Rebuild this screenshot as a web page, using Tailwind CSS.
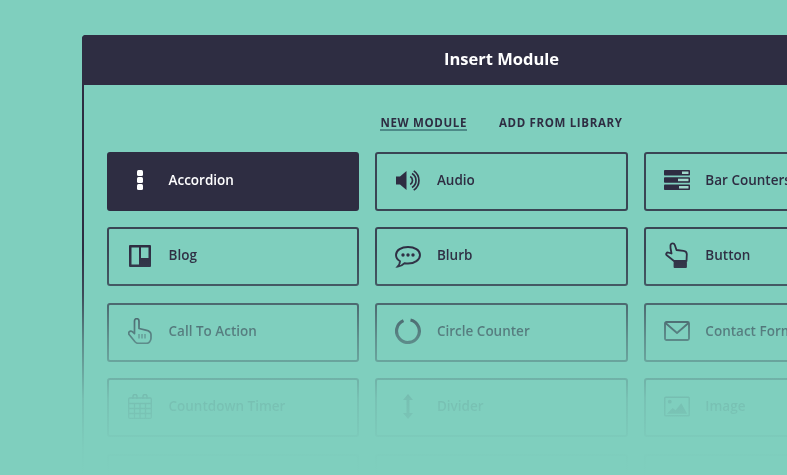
<!DOCTYPE html>
<html lang="en">
<head>
  <meta charset="UTF-8" />
  <meta name="viewport" content="width=device-width, initial-scale=1.0" />
  <title>Insert Module</title>
  <script src="https://cdn.jsdelivr.net/npm/@tailwindcss/browser@4"></script>
</head>
<body class="relative h-[475px] overflow-hidden bg-[#7fcfbe] font-['Open_Sans',sans-serif] text-[#2e2d42]">

  <!-- modal -->
  <div class="ml-[82px] mt-[35px] w-[839px] rounded-t-[4px] border-2 border-[#2e2d42] blur-[0.45px]">
    <header class="-m-[2px] flex h-[50px] items-center justify-center rounded-t-[4px] bg-[#2e2d42] pb-[2px] text-[16.5px] font-bold text-white">Insert Module</header>

    <div class="pl-[23px] pr-[23px] pt-[33px]">
      <!-- tabs -->
      <nav class="flex h-[15px] items-start justify-center gap-[32px] text-[11.5px] font-bold leading-[13px] tracking-[0.65px]">
        <a class="border-b-2 border-[#4d8a88]">NEW MODULE</a>
        <a>ADD FROM LIBRARY</a>
      </nav>

      <!-- module grid -->
      <div class="mt-[21px] grid grid-cols-3 gap-x-[16.3px] gap-y-[16.4px] text-[13.5px] font-semibold">

        <div class="flex h-[59px] items-center gap-[15.5px] rounded-[3px] border-2 border-[#2e2d42] bg-[#2e2d42] px-[18px] pb-[3px] text-white">
          <div class="flex w-[26px] justify-center">
            <svg width="6" height="20" viewBox="0 0 6 20" fill="#fff"><rect width="6" height="6" rx="1.500"/><rect y="7" width="6" height="6" rx="1.500"/><rect y="14" width="6" height="6" rx="1.500"/></svg>
          </div>
          <span>Accordion</span>
        </div>

        <div class="flex h-[59px] items-center gap-[15.5px] rounded-[3px] border-2 border-[#2e2d42]/85 px-[18px] pb-[3px]">
          <div class="flex w-[26px] justify-center">
            <svg width="25" height="21" viewBox="0 0 25 21" fill="none" stroke="#2e2d42"><path d="M0 6.500h4L10.500 1v19L4 14.500H0z" fill="#2e2d42" stroke="none"/><path d="M14.250 6.600a4.500 4.500 0 0 1 0 7.800" stroke-width="1.700"/><path d="M16 3.570a8 8 0 0 1 0 13.860" stroke-width="1.700"/><path d="M17.750 .9a11.500 11.500 0 0 1 0 19.200" stroke-width="1.700"/></svg>
          </div>
          <span>Audio</span>
        </div>

        <div class="flex h-[59px] items-center gap-[15.5px] rounded-[3px] border-2 border-[#2e2d42]/85 px-[18px] pb-[3px]">
          <div class="flex w-[26px] justify-center">
            <svg width="26" height="20" viewBox="0 0 26 20"><rect width="26" height="5.500" rx=".8" fill="#2e2d42"/><rect y="7.200" width="26" height="5.500" rx=".8" fill="#2e2d42"/><rect y="14.500" width="26" height="5.500" rx=".8" fill="#2e2d42"/><rect x="18" y="1.500" width="6.500" height="2.500" fill="#9fd8cb"/><rect x="14" y="8.700" width="10.500" height="2.500" fill="#9fd8cb"/><rect x="15" y="16" width="9.500" height="2.500" fill="#9fd8cb"/></svg>
          </div>
          <span>Bar Counters</span>
        </div>

        <div class="flex h-[59px] items-center gap-[15.5px] rounded-[3px] border-2 border-[#2e2d42]/85 px-[18px] pb-[3px]">
          <div class="mt-[2px] flex w-[26px] justify-center">
            <svg width="22" height="22" viewBox="0 0 22 22"><rect width="22" height="22" rx="1" fill="#2e2d42"/><rect x="2.500" y="2.500" width="7.500" height="17" fill="#7fcfbe"/><rect x="12" y="2.500" width="7.500" height="10.500" fill="#7fcfbe"/></svg>
          </div>
          <span>Blog</span>
        </div>

        <div class="flex h-[59px] items-center gap-[15.5px] rounded-[3px] border-2 border-[#2e2d42]/85 px-[18px] pb-[3px]">
          <div class="mt-[4px] flex w-[26px] justify-center">
            <svg width="26" height="22" viewBox="0 0 26 22" fill="none" stroke="#2e2d42" stroke-width="1.900"><path d="M13 1C6.500 1 1 4 1 9c0 2.500 1.500 4.700 4 6.200 0 1.800-.8 3.800-2.200 5.300 2.800-.3 5.200-1.500 6.800-3.300 1.100.2 2.200.3 3.400.3 6.500 0 12-3.500 12-8.500S19.500 1 13 1z"/><g fill="#2e2d42" stroke="none"><circle cx="8" cy="9" r="1.700"/><circle cx="13" cy="9" r="1.700"/><circle cx="18" cy="9" r="1.700"/></g></svg>
          </div>
          <span>Blurb</span>
        </div>

        <div class="flex h-[59px] items-center gap-[15.5px] rounded-[3px] border-2 border-[#2e2d42]/85 px-[18px] pb-[3px]">
          <div class="flex w-[26px] justify-center">
            <svg width="23" height="26" viewBox="0 0 23 26" fill="none" stroke="#2e2d42" stroke-width="1.800" stroke-linejoin="round"><path d="M5.500 3c.8-2.200 3.500-2.200 4.300 0L11.500 8l7 .8c2.500.3 3.500 1.500 3.300 4L21.500 19H9L1.500 13c-.8-1 0-2.500 1.500-2.500l3.500 1L5.500 6z"/><path d="M9.500 20.500h11.500V25H9.500z" fill="#2e2d42"/></svg>
          </div>
          <span>Button</span>
        </div>

        <div class="flex h-[59px] items-center gap-[15.5px] rounded-[3px] border-2 border-[#2e2d42]/85 px-[18px] pb-[3px]">
          <div class="flex w-[26px] justify-center">
            <svg width="24" height="26" viewBox="0 0 24 26" fill="none" stroke="#2e2d42" stroke-width="1.700" stroke-linejoin="round"><path d="M6.500 3c0-1.300 1-2.300 2.200-2.300S11 1.700 11 3v7.500l6.800 1.600c2.600.6 5.200 1.700 5.200 4.400v3.700c0 1.500-.5 2.600-1.300 3.500-.8 1-1.700 1.600-3.200 1.600H10c-1.300 0-2.200-.6-3-1.500L1.500 17c-1-1-1.100-2.400-.3-3.200.9-.9 2.200-.9 3.100-.1l2.200 2z"/><path d="M11 16v4.500M14 16v4.500M17 16v4.500" stroke-width="1"/></svg>
          </div>
          <span>Call To Action</span>
        </div>

        <div class="flex h-[59px] items-center gap-[15.5px] rounded-[3px] border-2 border-[#2e2d42]/85 px-[18px] pb-[3px]">
          <div class="flex w-[26px] justify-center">
            <svg width="26" height="26" viewBox="0 0 26 26" fill="none" stroke="#2e2d42" stroke-width="3.200"><path d="M15.500 2a11.400 11.400 0 1 1-7 .6"/></svg>
          </div>
          <span>Circle Counter</span>
        </div>

        <div class="flex h-[59px] items-center gap-[15.5px] rounded-[3px] border-2 border-[#2e2d42]/85 px-[18px] pb-[3px]">
          <div class="flex w-[26px] justify-center">
            <svg width="26" height="20" viewBox="0 0 26 20" fill="none" stroke="#2e2d42" stroke-width="1.800" stroke-linejoin="round"><rect x="1" y="1" width="24" height="18" rx="1.500"/><path d="M1.500 2l11.500 10L24.500 2"/></svg>
          </div>
          <span>Contact Form</span>
        </div>

        <div class="flex h-[59px] items-center gap-[15.5px] rounded-[3px] border-2 border-[#2e2d42]/85 px-[18px] pb-[3px]">
          <div class="flex w-[26px] justify-center">
            <svg width="24" height="25" viewBox="0 0 24 25" fill="none" stroke="#2e2d42" stroke-width="1.300"><rect x=".7" y="4" width="22.600" height="20.300" rx="1"/><path d="M.7 9.500h22.600M.7 14.500h22.600M.7 19.500h22.600M6.500 9.500v14.800M12 9.500v14.800M17.500 9.500v14.800"/><path d="M5 5V2.500a2 2 0 0 1 4 0V5M15 5V2.500a2 2 0 0 1 4 0V5" stroke-width="1.500"/></svg>
          </div>
          <span>Countdown Timer</span>
        </div>

        <div class="flex h-[59px] items-center gap-[15.5px] rounded-[3px] border-2 border-[#2e2d42]/85 px-[18px] pb-[3px]">
          <div class="flex w-[26px] justify-center">
            <svg width="10" height="25" viewBox="0 0 10 25" fill="#2e2d42"><path d="M5 0l5 6H6.500v13H10l-5 6-5-6h3.500V6H0z"/></svg>
          </div>
          <span>Divider</span>
        </div>

        <div class="flex h-[59px] items-center gap-[15.5px] rounded-[3px] border-2 border-[#2e2d42]/85 px-[18px] pb-[3px]">
          <div class="flex w-[26px] justify-center">
            <svg width="27" height="21" viewBox="0 0 27 21" fill="none" stroke="#2e2d42" stroke-width="1.500"><rect x=".8" y=".8" width="25.400" height="19.400" rx="1"/><circle cx="6" cy="5.500" r="2" fill="#2e2d42" stroke="none"/><path d="M3 18l6-6 3 2.500L18 7l6 11z" fill="#2e2d42" stroke="none"/></svg>
          </div>
          <span>Image</span>
        </div>

        <div class="h-[59px] rounded-[3px] border-2 border-[#2e2d42]/85"></div>
        <div class="h-[59px] rounded-[3px] border-2 border-[#2e2d42]/85"></div>
        <div class="h-[59px] rounded-[3px] border-2 border-[#2e2d42]/85"></div>
      </div>
    </div>
  </div>

  <!-- fade to background -->
  <div class="absolute inset-x-0 bottom-0 h-[225px] bg-[linear-gradient(to_bottom,#7fcfbe00_0%,#7fcfbe30_20%,#7fcfbe90_40%,#7fcfbee6_66%,#7fcfbefb_88%,#7fcfbe_100%)]"></div>
</body>
</html>
